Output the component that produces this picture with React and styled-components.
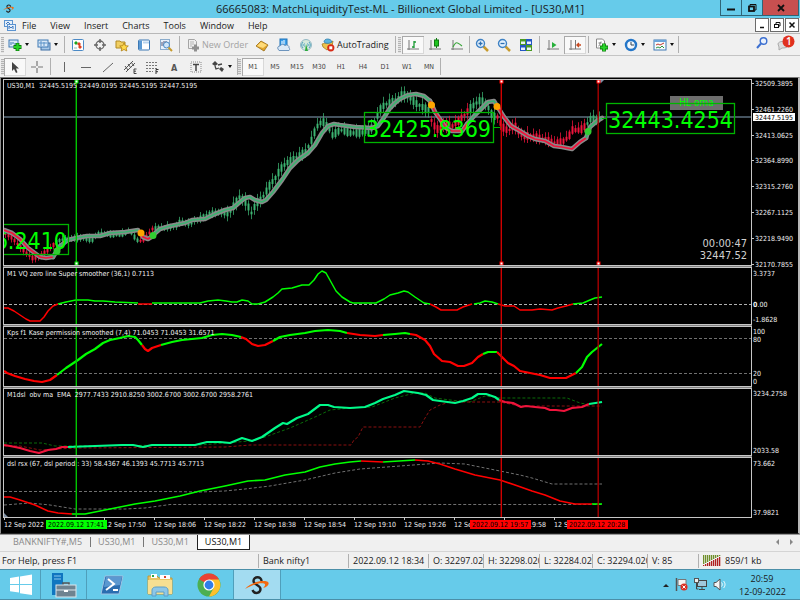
import React, { useState } from 'react';
import styled, { createGlobalStyle, css } from 'styled-components';

const GlobalStyle = createGlobalStyle`
  * {
    box-sizing: border-box;
  }
  body {
    margin: 0;
    background: #f0f0f0;
    font-family: 'Open Sans', 'Noto Sans', sans-serif;
    font-size: 9px;
    line-height: 12px;
    color: #1a1a1a;
  }
  button {
    font: inherit;
    color: inherit;
    padding: 0;
    margin: 0;
    border: none;
    background: none;
  }
`;

const Desktop = styled.div`
  display: flex;
  flex-direction: column;
  min-height: 100vh;
`;

/* ---------- window chrome ---------- */

const TitleBar = styled.header`
  display: flex;
  justify-content: space-between;
  align-items: flex-start;
  height: 18px;
  background: #66cbea;
`;

const TitleSide = styled.div`
  display: flex;
  width: 80px;
  padding-left: ${(props) => (props.$start ? '3px' : '0')};
  padding-top: ${(props) => (props.$start ? '3px' : '0')};
`;

const TitleText = styled.h1`
  margin: 0;
  font-size: 11px;
  font-weight: 400;
  line-height: 18px;
  white-space: nowrap;
`;

const WindowButton = styled.button`
  display: flex;
  align-items: center;
  justify-content: center;
  width: ${(props) => (props.$close ? '37px' : '22px')};
  height: 16px;
  background: ${(props) => (props.$close ? '#c75050' : '#66cbea')};
  border: 1px solid #2f6577;
  border-top: none;
  margin-left: ${(props) => (props.$first ? '0' : '-1px')};
`;

const MenuBar = styled.nav`
  display: flex;
  align-items: center;
  height: 16px;
  padding-left: 3px;
  gap: 14px;
  border-bottom: 1px solid #b8b8b8;

  > svg {
    margin-right: -9px;
  }
`;

const MenuItem = styled.button`
  line-height: 14px;
`;

const MdiButtons = styled.div`
  display: flex;
  align-self: flex-start;
  gap: 1px;
  margin-left: auto;
  padding-right: 1px;
`;

const MdiButton = styled.button`
  display: flex;
  align-items: center;
  justify-content: center;
  width: 14px;
  height: 14px;
  background: #fff;
  border: 1px solid #6b6b6b;
`;

const Toolbar = styled.div`
  display: flex;
  align-items: center;
  height: ${(props) => (props.$last ? '21px' : '22px')};
  border-bottom: ${(props) => (props.$last ? 'none' : '1px solid #c4c4c4')};
`;

const Grip = styled.span`
  width: 3px;
  height: 16px;
  margin: ${(props) => (props.$inner ? '0 1px 0 0' : '0 0 0 1px')};
  background: repeating-linear-gradient(#b4b4b4 0 1px, #e4e4e4 1px 2px);
`;

const Divider = styled.span`
  width: ${(props) => props.$width || 5}px;
  height: 17px;
  background: linear-gradient(#b0b0b0, #b0b0b0) center / 1px 100% no-repeat;
`;

const ToolButton = styled.button`
  display: flex;
  align-items: center;
  gap: 2px;
  height: 18px;
  width: ${(props) => (props.$label ? `${props.$label}px` : props.$drop ? '29px' : '22px')};
  padding-left: ${(props) => (props.$text ? '0' : '4px')};
  justify-content: ${(props) => (props.$text ? 'center' : 'flex-start')};
  white-space: nowrap;
  color: ${(props) => (props.$muted ? '#a3a3a3' : '#1a1a1a')};

  > svg {
    flex: none;
  }
  ${(props) =>
    props.$text &&
    css`
      font-family: 'DejaVu Sans Condensed', 'DejaVu Sans', sans-serif;
      font-size: 7px;
      color: #444;
    `}
  ${(props) =>
    props.$pressed &&
    css`
      background: #f9f9f9;
      box-shadow: inset 1px 1px 0 #a9a9a9, inset -1px -1px 0 #d8d8d8;
    `}
`;

const Caret = styled.span`
  margin-left: 1px;
  border: 2px solid transparent;
  border-top: 3px solid #111;
  border-bottom: none;
`;

const RightTools = styled.div`
  display: flex;
  gap: 7px;
  margin-left: auto;
  padding-right: 4px;
`;

/* ---------- chart window ---------- */

const ChartWindow = styled.main`
  display: flex;
  flex-direction: column;
  flex: 1;
  padding: 1px 0 0 2px;
  background: #000;
  border-top: 1px solid #777;
  border-left: 1px solid #8c8c8c;
  border-right: 2px solid #b8b8b8;
  border-bottom: 1px solid #222;
`;

const Panel = styled.section`
  display: flex;
  flex: none;
  height: ${(props) => props.$size}px;
`;

const Splitter = styled.div`
  height: 1px;
  margin-right: 46px;
  background: #808080;
`;

const Plot = styled.div`
  position: relative;
  flex: 1;
  overflow: hidden;
  border: 1px solid #c6c6c6;

  > svg {
    position: relative;
    display: block;
    width: 100%;
    height: 100%;
    pointer-events: none;
  }
`;

const AxisSvg = styled.svg`
  flex: none;
  width: 46px;
  height: 100%;
  overflow: visible;
`;

const ChartText = styled.text`
  font-family: 'DejaVu Sans Condensed', 'DejaVu Sans', sans-serif;
  font-size: ${(props) => props.$size || 7}px;
  fill: ${(props) => props.$color || '#f0f0f0'};
  white-space: pre;
`;

const ChartBadge = styled.button`
  position: absolute;
  top: 16px;
  right: 28px;
  width: 53px;
  height: 14px;
  background: #6e6e6e;
  color: #00ff00;
  font-family: 'DejaVu Sans Condensed', 'DejaVu Sans', sans-serif;
  font-size: 10px;
`;

const Countdown = styled.div`
  position: absolute;
  right: 4px;
  bottom: 3px;
  text-align: right;
  font-family: 'DejaVu Sans Condensed', 'DejaVu Sans', sans-serif;
  font-size: 11px;
  line-height: 12px;
  color: #d0d0d0;
`;

const TimeAxis = styled.svg`
  display: block;
  flex: none;
  width: 100%;
  height: 15px;
`;

/* ---------- bottom bars ---------- */

const TabBar = styled.div`
  display: flex;
  align-items: center;
  height: 18px;
  padding: 0 3px 2px 5px;
  border-top: 1px solid #999;
  border-bottom: 1px solid #d4d4d4;
`;

const ChartTab = styled.button`
  height: 15px;
  padding: 0 7px;
  color: ${(props) => (props.$active ? '#111' : '#8a8a8a')};
  background: ${(props) => (props.$active ? '#fff' : 'transparent')};
  border: 1px solid ${(props) => (props.$active ? '#222' : 'transparent')};
  border-top: none;
`;

const TabMark = styled.span`
  width: 1px;
  height: 10px;
  margin: 0 -1px 0 0;
  background: ${(props) => (props.$hidden ? 'transparent' : '#777')};
`;

const TabScroll = styled.div`
  display: flex;
  gap: 10px;
  margin-left: auto;
  padding-right: 3px;
`;

const StatusBar = styled.footer`
  display: flex;
  align-items: center;
  height: 17px;
`;

const StatusCell = styled.div`
  display: flex;
  align-items: center;
  flex: ${(props) => (props.$grow ? '1 1 0' : `0 0 ${props.$width}px`)};
  height: 14px;
  padding-left: ${(props) => (props.$grow ? '2px' : '4px')};
  gap: 3px;
  overflow: hidden;
  white-space: nowrap;
  border-left: ${(props) => (props.$grow ? 'none' : '1px solid #b0b0b0')};
`;

const Taskbar = styled.footer`
  display: flex;
  height: 31px;
  background: #66cbea;
  border-top: 1px solid #4b8fa8;
  border-bottom: 1px solid #4b8fa8;
`;

const TaskButton = styled.button`
  display: flex;
  align-items: center;
  justify-content: center;
  width: ${(props) => props.$width}px;
  background: ${(props) => (props.$active ? '#a3dcf1' : 'transparent')};
  border-right: 1px solid ${(props) => (props.$edge ? '#4f9fbb' : 'transparent')};
  border-left: 1px solid ${(props) => (props.$active ? '#4f9fbb' : 'transparent')};
`;

const Tray = styled.div`
  display: flex;
  align-items: center;
  gap: 6px;
  margin-left: auto;
`;

const Clock = styled.time`
  width: 46px;
  margin: 0 15px 0 7px;
  line-height: 13px;
  text-align: center;
  white-space: nowrap;
`;

/* ---------- icons ---------- */

const icons = {
  newChart: (
    <>
      <rect x="1" y="2" width="9" height="7" fill="#dcebf8" stroke="#3c78b4" />
      <path d="M3 7V4M5 6V4M7 7V5" stroke="#3c78b4" fill="none" />
      <path d="M5.500 9H13.500M9.500 5V13" stroke="#0a7a0a" strokeWidth="3.800" />
      <path d="M6 9H13M9.500 5.500V12.500" stroke="#28d428" strokeWidth="2.200" />
    </>
  ),
  profiles: (
    <>
      <rect x="4" y="5" width="9" height="7" fill="#a9c9e8" stroke="#3c6ea5" />
      <rect x="1" y="2" width="10" height="7" fill="#d9e8f7" stroke="#3c78b4" />
      <path d="M2 5H10M4 3V8M7 4V8" stroke="#5b92c8" fill="none" />
    </>
  ),
  marketWatch: (
    <>
      <rect x="1.500" y="1.500" width="11" height="11" rx="1" fill="#fdfdfd" stroke="#4b8ac6" />
      <path d="M3 5l2-2 2 2-2 2z" fill="#1da51d" />
      <path d="M6 6l2-2 2 2-2 2zM7 9l2-2 2 2-2 2z" fill="#e04020" />
      <path d="M3 10h3" stroke="#9bb" />
    </>
  ),
  crosshair: (
    <>
      <circle cx="7" cy="7" r="4" fill="none" stroke="#666" strokeWidth="1.300" />
      <path d="M7 1V5M7 9V13M1 7H5M9 7H13" stroke="#666" strokeWidth="1.500" />
    </>
  ),
  favorites: (
    <>
      <path d="M1 3h4l1 1h4v6H1z" fill="#f2cf62" stroke="#b08a22" />
      <path d="M9 5l1.300 2.700 3 .3-2.200 2 .7 3L9 11.500 6.200 13l.7-3-2.200-2 3-.3z" fill="#ffd94a" stroke="#b07f10" strokeWidth=".8" />
    </>
  ),
  navigator: (
    <>
      <rect x="1.500" y="2" width="11" height="10" rx="1" fill="#fff" stroke="#3c78b4" />
      <rect x="2" y="2.500" width="3" height="9" fill="#5c9ad4" />
      <path d="M6 4.500h6" stroke="#b9d4ee" strokeWidth="2" />
    </>
  ),
  tester: (
    <>
      <rect x="1.500" y="1.500" width="9" height="10" fill="#e8f1fa" stroke="#8aaccc" />
      <path d="M3 8V4M5 7V3M7 5V3" stroke="#557" />
      <circle cx="7.500" cy="7" r="3" fill="#cfe6fa" stroke="#4a88c0" />
      <path d="M9.500 9.500L13 13" stroke="#c79a2c" strokeWidth="2" />
    </>
  ),
  newOrder: (
    <>
      <path d="M2.500 1.500h6l2 2v7h-8z" fill="#eee" stroke="#a5a5a5" />
      <path d="M4 4h4M4 6h4M4 8h2" stroke="#b5b5b5" />
      <path d="M6 10H13M9.500 6.500V13.500" stroke="#8f8f8f" strokeWidth="3" />
    </>
  ),
  gold: (
    <>
      <path d="M1 8l5-5 7 4-4 6z" fill="#e0a52c" stroke="#9a6c10" strokeWidth=".8" />
      <path d="M2 8l4-4 6 3-4 3z" fill="#ffdb78" />
    </>
  ),
  hosting: (
    <>
      <rect x="3" y="1" width="7" height="7" fill="#3aa0ee" stroke="#1f72b8" />
      <path d="M5 3v4M7 2v4" stroke="#fff" />
      <path d="M1 11a2 2 0 012-3 3 3 0 015-.5A2.500 2.500 0 0112 10a1.500 1.500 0 010 2.500H2z" fill="#dbe9f7" stroke="#6d94bd" />
    </>
  ),
  signals: (
    <>
      <circle cx="7" cy="7" r="5.500" fill="#d5e9dc" stroke="#94b9c4" />
      <path d="M4 10a4.200 4.200 0 010-6M10 4a4.200 4.200 0 010 6M5.500 8.500a2 2 0 010-3M8.500 5.500a2 2 0 010 3" fill="none" stroke="#4d9fc0" />
      <path d="M7 6l2 7H6z" fill="#2daa3a" />
    </>
  ),
  autoTrading: (
    <>
      <path d="M1 6c3-1 9-1 11-3l-1 5-5 4-4-3z" fill="#edc34d" stroke="#a47c1c" strokeWidth=".8" />
      <path d="M3 4c0-4 7-4 8 0-2 1.500-6 2-8 0z" fill="#58b4e0" stroke="#2d7ca8" strokeWidth=".8" />
      <circle cx="9.800" cy="9.800" r="3.600" fill="#d82a16" />
      <rect x="8.300" y="8.300" width="3" height="3" fill="#fff" />
    </>
  ),
  bars: (
    <>
      <path d="M3 2v10M1 11h12" stroke="#777" />
      <path d="M8 3v7M8 4h2M6 9h2" stroke="#1d9a35" strokeWidth="1.300" />
    </>
  ),
  candles: (
    <>
      <path d="M3 2v10M1 11h12" stroke="#777" />
      <path d="M8.500 0v10" stroke="#117a11" />
      <rect x="6.500" y="2" width="4" height="6" fill="#1fc41f" stroke="#117a11" />
    </>
  ),
  line: (
    <>
      <path d="M3 2v10M1 11h12" stroke="#777" />
      <path d="M3 9c3-6 4-5 9-1" fill="none" stroke="#3aa53a" strokeWidth="1.200" />
    </>
  ),
  zoomIn: (
    <>
      <path d="M8.500 8.500L13 13" stroke="#c79a2c" strokeWidth="2.500" />
      <circle cx="5.500" cy="5.500" r="4" fill="#e4f1fc" stroke="#3f82c4" strokeWidth="1.400" />
      <path d="M3.500 5.500h4M5.500 3.500v4" stroke="#2d6fb2" strokeWidth="1.300" />
    </>
  ),
  zoomOut: (
    <>
      <path d="M8.500 8.500L13 13" stroke="#c79a2c" strokeWidth="2.500" />
      <circle cx="5.500" cy="5.500" r="4" fill="#e4f1fc" stroke="#3f82c4" strokeWidth="1.400" />
      <path d="M3.500 5.500h4" stroke="#2d6fb2" strokeWidth="1.300" />
    </>
  ),
  tile: (
    <>
      <path d="M1 1h6v6H1zM7 7h6v6H7z" fill="#4a9a22" />
      <path d="M7 1h6v6H7zM1 7h6v6H1z" fill="#2456c4" />
      <path d="M2 3.500h4v2.500H2zM8 3.500h4v2.500H8zM2 9.500h4V12H2zM8 9.500h4V12H8z" fill="#e9f2fb" />
    </>
  ),
  scroll: (
    <>
      <path d="M3 2v10M1 11h12" stroke="#777" />
      <path d="M6 4l4.500 3L6 10z" fill="#27b03a" />
    </>
  ),
  shift: (
    <>
      <path d="M3 2v10M1 11h12M7.500 2v9" stroke="#777" />
      <path d="M13 7H9M11 5L9 7l2 2" fill="none" stroke="#c8481e" strokeWidth="1.400" />
    </>
  ),
  indicators: (
    <>
      <path d="M1.500 1h6l2 2v7h-8z" fill="#fff" stroke="#888" />
      <path d="M3.500 8c2 0 1-5 3-4M3.500 5h3" fill="none" stroke="#777" />
      <path d="M5 9.500H13M9 5.500V13.500" stroke="#0a7a0a" strokeWidth="3.800" />
      <path d="M5.500 9.500H12.500M9 6V13" stroke="#28d428" strokeWidth="2.200" />
    </>
  ),
  periods: (
    <>
      <circle cx="7" cy="7" r="5" fill="#f4f8fc" stroke="#2476c8" strokeWidth="2.400" />
      <path d="M7 4v3h3" fill="none" stroke="#345" />
    </>
  ),
  templates: (
    <>
      <rect x="1" y="2" width="12" height="10" fill="#f7fafc" stroke="#3c78b4" />
      <path d="M1 3h12" stroke="#6aa4da" strokeWidth="2" />
      <path d="M3 7l2-1 2 1 4-2" fill="none" stroke="#c0392b" />
      <path d="M3 10l2-1 2 1 2-2 2 2" fill="none" stroke="#2f9440" />
    </>
  ),
  search: (
    <>
      <circle cx="8.500" cy="5" r="3.300" fill="#e9f1fc" stroke="#3c6fd0" strokeWidth="1.400" />
      <path d="M6 7.500L2 12" stroke="#3c6fd0" strokeWidth="2" />
    </>
  ),
  cursor: <path d="M4 2v9l2-2 2 4 1.500-.8L8 8.500h3z" fill="#444" />,
  cross: <path d="M7 1v5M7 8v5M1 7h5M8 7h5" stroke="#777" strokeWidth="1.200" />,
  vline: <path d="M7.500 2v10" stroke="#666" />,
  hline: <path d="M2 7.500h10" stroke="#666" />,
  trend: <path d="M2 12L12 3" stroke="#666" />,
  channel: (
    <>
      <path d="M1 10L10 1M3 12L12 3M2 6l3 4M5 4l3 4M8 2l3 4" fill="none" stroke="#555" />
      <path d="M13.500 9H11v4.500h2.500M11 11.200h2" fill="none" stroke="#333" strokeWidth=".9" />
    </>
  ),
  fibo: (
    <>
      <path d="M1 2.500h12M1 5.500h12M1 8.500h12M1 11.500h7" stroke="#777" strokeDasharray="2 1" />
      <path d="M13.500 9.500H11V14M11 11.700h2" fill="none" stroke="#333" />
    </>
  ),
  label: (
    <>
      <rect x="2" y="2" width="10" height="10" fill="none" stroke="#888" strokeDasharray="1 1" />
      <path d="M4 4.500h6M7 4.500V11" stroke="#444" strokeWidth="1.500" />
    </>
  ),
  arrows: (
    <>
      <path d="M1 4l3-3 3 3-3 2z" fill="#444" />
      <path d="M8 9l2-2 3 2-2 3z" fill="#444" />
      <path d="M4 6l1 3 3-1M7 5l4-1" fill="none" stroke="#444" strokeWidth="1.300" />
    </>
  ),
};

const Icon = ({ name, size = 14 }) => (
  <svg width={size} height={size} viewBox="0 0 14 14" aria-hidden="true">
    {icons[name]}
  </svg>
);

const BrokerLogo = ({ size }) => (
  <svg width={size} height={size} viewBox="0 0 24 24" aria-hidden="true">
    <path d="M16.500 8c0-5-8-5-8 0 0 4 7 4 7 8s-6 6-8 1" fill="none" stroke="#222" strokeWidth="2.400" />
    <path d="M0 16C5 10 15 7 22 8.500c3 1 2 5-4 6.500 2-2 3-4 1-4.500C14 9.500 7 12 0 16z" fill="#f26a10" />
  </svg>
);

/* ---------- chart data ---------- */

const GREEN = '#00ff00';
const RED = '#ff0000';
const SEA = '#3cb371';
const CRIMSON = '#f0143c';
const MINT = '#00fa8a';

// rough course of the price, [x, y]
const price = [
  [4, 234], [10, 236], [18, 245], [25, 252], [32, 258], [38, 257], [44, 253], [50, 248], [55, 243],
  [60, 240], [66, 239], [80, 238], [92, 240], [98, 234], [110, 235], [120, 235], [130, 231], [136, 240],
  [141, 241], [146, 237], [152, 229], [158, 228], [168, 227], [175, 227], [180, 221], [187, 224],
  [200, 218], [210, 213], [220, 212], [228, 214], [235, 203], [240, 196], [246, 203], [251, 213],
  [256, 203], [262, 198], [266, 191], [270, 184], [275, 178], [280, 169], [286, 163], [292, 160],
  [298, 156], [305, 152], [310, 143], [316, 127], [322, 121], [328, 128], [332, 135], [340, 130],
  [350, 133], [360, 133], [370, 130], [376, 118], [381, 107], [388, 103], [395, 101], [402, 94],
  [410, 98], [415, 103], [420, 106], [428, 110], [432, 124], [438, 130], [444, 124], [452, 126],
  [458, 121], [464, 115], [470, 108], [476, 103], [480, 100], [486, 104], [492, 116], [497, 117],
  [502, 127], [508, 131], [514, 125], [520, 135], [528, 136], [535, 137], [545, 140], [555, 143],
  [562, 142], [568, 137], [572, 130], [580, 130], [586, 125], [590, 119], [597, 120], [602, 117],
];

const redRanges = [[0, 54], [140, 153], [430, 467], [495, 586]];

const priceAt = (x) => {
  const i = Math.max(1, price.findIndex((p) => p[0] >= x));
  const [x0, y0] = price[i - 1];
  const [x1, y1] = price[i];
  return y0 + ((y1 - y0) * (x - x0)) / (x1 - x0);
};

const candles = [];
for (let x = 5; x <= 601; x += 3) {
  const n = (x - 5) / 3;
  const mid = priceAt(x);
  const quiet = x < 225 ? 0.6 : 1;
  const body = (2 + Math.abs(Math.sin(n * 2.3)) * 6) * quiet;
  const up = (1 + Math.abs(Math.sin(n * 1.7 + 1)) * 5) * quiet;
  const down = (1 + Math.abs(Math.cos(n * 3.1)) * 4) * quiet;
  const red = redRanges.some(([a, b]) => x >= a && x <= b);
  candles.push({ x, mid, body, up, down, color: red ? CRIMSON : SEA });
}

const average = [
  [CRIMSON, '4,230 12,233 20,239 28,248 36,254 40,257 46,258 53,257'],
  [SEA, '53,257 60,246 68,240 76,238 87,236 100,236 110,233 125,232 138,230'],
  [CRIMSON, '141,233 143,237 148,239 153,236'],
  [SEA, '153,235 160,229 170,226 185,223 192,220 205,219 215,214 225,210 233,208 240,202 245,198 250,197 255,200 262,202 266,200 273,192 282,180 290,168 298,160 308,153 315,145 322,133 328,126 334,124 340,125 355,127 372,128 378,126 383,119 390,108 395,103 400,99 408,95 416,94 424,96 430,101'],
  [CRIMSON, '430,101 435,112 440,119 446,128 452,131 462,131 467,124'],
  [SEA, '467,124 475,115 482,108 488,102 494,101 497,106'],
  [CRIMSON, '497,106 504,117 511,126 520,131 528,136 535,139 545,141 554,146 562,147 572,149 580,142 586,138'],
  [SEA, '586,138 590,127 597,121 602,118'],
];

const vq = [
  [RED, '4,308 8,308 14,311 20,315 26,319 30,321 40,321 44,317 48,311 53,306 58,304'],
  [GREEN, '58,304 66,302 76,300 88,300 95,301 103,301 115,302 138,303'],
  [RED, '138,304 152,304'],
  [GREEN, '152,303 200,303 208,301 218,300 226,301 232,302 237,302 242,300 248,301 252,304 258,304 265,302 273,297 278,293 282,289 292,288 302,285 309,285 314,280 318,274 322,271 326,273 331,282 336,291 342,297 350,302 353,303 376,303 384,299 390,295 398,293 404,291 408,292 415,297 424,303 430,304'],
  [RED, '430,304 436,307 441,310 457,310 463,307 472,304'],
  [GREEN, '474,304 480,303 485,301 492,302 498,304'],
  [RED, '498,304 505,306 514,306 520,310 532,310 540,309 552,310 558,308 566,306 573,304'],
  [GREEN, '573,304 583,303 590,300 595,298 602,297'],
];

const kase = [
  [RED, '4,371 7,373 15,376 25,379 34,381 42,382 50,380 57,375'],
  [GREEN, '57,375 66,368 78,360 86,354 95,349 103,343 110,340 120,338 128,336 135,337 138,340 142,345'],
  [RED, '142,345 145,349 148,351 152,348 161,345'],
  [GREEN, '161,345 172,342 182,340 202,338 212,335 222,334 232,335 241,337'],
  [RED, '241,337 246,339 252,344 258,346 265,345 273,341'],
  [GREEN, '273,341 280,337 290,335 305,333 315,331 328,330 340,331 347,333'],
  [RED, '347,333 360,335 375,336 383,335'],
  [GREEN, '383,335 395,334 405,333 410,334'],
  [RED, '410,334 416,335 425,340 430,346 434,354 442,361 450,362 458,366 464,366 472,363 478,357 483,354'],
  [GREEN, '483,354 488,352 497,352'],
  [RED, '497,352 503,358 508,363 514,366 520,371 530,373 540,375 550,378 566,378 576,373'],
  [GREEN, '576,373 582,367 587,357 592,352 602,344'],
];

const obv = [
  [CRIMSON, '4,445 10,446 20,448 30,451 39,453 48,450 56,449 62,447 68,447'],
  [MINT, '68,447 95,446 122,445 133,445 143,447 152,445 195,445 207,442 220,442 230,443 242,438 252,441 262,437 275,428 283,423 287,424 297,418 308,414 320,405 328,405 334,407 350,408 365,407 375,403 383,399 395,395 404,391 418,393 426,395 433,400 440,401 455,403 463,401 472,398 478,394 486,394 495,397 499,400'],
  [CRIMSON, '499,400 505,402 513,403 521,407 526,406 535,407 545,408 550,410 556,410 564,411 572,408 582,407 589,404'],
  [MINT, '589,404 602,402'],
];

const rsx = [
  [RED, '4,497 10,497 20,500 35,505 48,511 58,513 72,514'],
  [GREEN, '72,514 85,514 100,511 115,508 135,504 155,501 180,496 200,491 225,486 248,481 265,480 285,475 305,472 320,467 335,464 350,462 361,461'],
  [RED, '361,461 383,462'],
  [GREEN, '383,462 415,460'],
  [RED, '415,460 428,461 440,464 455,469 475,475 500,480 515,485 532,491 545,495 560,501 575,504 592,504'],
  [GREEN, '592,504 602,504'],
];

const Series = ({ data, width }) =>
  data.map(([color, points]) => (
    <polyline key={points} points={points} fill="none" stroke={color} strokeWidth={width} strokeLinejoin="round" />
  ));

const Dashes = ({ points, color = '#707070' }) => (
  <polyline points={points} fill="none" stroke={color} strokeDasharray="3 2" />
);

const VerticalMarks = ({ top }) => (
  <g strokeWidth="1.400">
    <path d={`M76.300 ${top}v400`} stroke="#00c400" />
    <path d={`M501.300 ${top}v400`} stroke="#d00000" />
    <path d={`M598.200 ${top}v400`} stroke="#a80000" />
  </g>
);

// small squares at both ends of each vertical line
const Handles = () =>
  [[76, '#00e000'], [501, RED], [598, RED]].map(([x, color]) => (
    <g key={x} fill="#fff" stroke={color}>
      <rect x={x - 1} y="80" width="3" height="3" />
      <rect x={x - 1} y="262" width="3" height="3" />
    </g>
  ));

const PlotArea = ({ top, title, children, extra, overlay }) => (
  <Plot>
    {extra}
    <svg>
      <g transform={`translate(-4 ${-top - 1})`}>
        {children}
        <VerticalMarks top={top} />
        {overlay}
        <ChartText x="7" y={top + 9}>{title}</ChartText>
      </g>
    </svg>
  </Plot>
);

const Axis = ({ top, labels, children }) => (
  <AxisSvg>
    <g transform={`translate(-752 ${-top})`}>
      {labels.map(([y, text, tick]) => (
        <g key={text}>
          {tick && <path d={`M752 ${y}.500h2`} stroke="#c6c6c6" />}
          <ChartText x={tick ? 755 : 753} y={y + 3}>{text}</ChartText>
        </g>
      ))}
      {children}
    </g>
  </AxisSvg>
);

const PriceTag = ({ x, y, width, text, textX }) => (
  <g>
    <rect x={x + 0.5} y={y + 0.5} width={width} height="30" fill="none" stroke="#00b400" strokeWidth="1.300" />
    <ChartText x={textX} y={y + 25} $size={23} $color={GREEN}>{text}</ChartText>
  </g>
);

const MainPlot = () => (
  <Panel $size={187}>
    <PlotArea
      top={79}
      title="US30,M1  32445.5195 32449.0195 32445.5195 32447.5195"
      overlay={<Handles />}
      extra={
        <>
          <ChartBadge>HL oma</ChartBadge>
          <Countdown>
            00:00:47
            <br />
            32447.52
          </Countdown>
        </>
      }
    >
      <path d="M4 117h4000" stroke="#5d6f7f" strokeWidth="1.500" />
      {candles.map((c) => (
        <g key={c.x} fill={c.color}>
          <rect x={c.x} y={c.mid - c.body / 2 - c.up} width="1" height={c.body + c.up + c.down} opacity=".75" />
          <rect x={c.x - 0.5} y={c.mid - c.body / 2} width="2" height={c.body} />
        </g>
      ))}
      {average.map(([color, points]) => (
        <polyline key={points} points={points} fill="none" stroke="#8a8a8a" strokeWidth="4.600" strokeLinejoin="round" strokeLinecap="round" />
      ))}
      <Series data={average} width="1.700" />
      <PriceTag x={-60} y={224} width={128} text="32236.2410" textX={-58} />
      <PriceTag x={364} y={112} width={129} text="32425.8369" textX={366} />
      <PriceTag x={606} y={103} width={128} text="32443.4254" textX={608} />
      <path d="M494 127.500h7M602 118.500h4" stroke="#00b400" />
      <g fill="#ffa500">
        <circle cx="141" cy="233" r="3.500" />
        <circle cx="431.500" cy="105" r="3.500" />
        <circle cx="497" cy="106.500" r="3.500" />
      </g>
      <g fill="#32cd32">
        <circle cx="57" cy="251" r="3.500" />
        <circle cx="153" cy="235.500" r="3.500" />
        <circle cx="588" cy="131.500" r="3.500" />
      </g>
      <path d="M597 80h7l-3 3z" fill="#7f90a4" />
    </PlotArea>
    <Axis
      top={79}
      labels={[
        [83, '32509.3895', true], [109, '32461.2260', true], [135, '32413.0625', true],
        [160, '32364.8990', true], [186, '32315.2760', true], [212, '32267.1125', true],
        [238, '32218.9490', true], [264, '32170.7855', true],
      ]}
    >
      <rect x="753" y="113" width="42" height="8" fill="#fff" />
      <ChartText x="755" y="120" $color="#000">32447.5195</ChartText>
    </Axis>
  </Panel>
);

const timeLabels = [[4, '12 Sep 2022'], [104, '12 Sep 17:50'], [154, '12 Sep 18:06'], [204, '12 Sep 18:22'],
  [254, '12 Sep 18:38'], [304, '12 Sep 18:54'], [354, '12 Sep 19:10'], [404, '12 Sep 19:26'],
  [454, '12 Sep 19:42'], [504, '12 Sep 19:58'], [554, '12 Sep 20:14']];

const timeMarks = [
  [46, '2022.09.12 17:41', GREEN],
  [470, '2022.09.12 19:57', RED],
  [567, '2022.09.12 20:28', RED],
];

const ChartArea = () => (
  <ChartWindow>
    <MainPlot />
    <Splitter />
    <Panel $size={58}>
      <PlotArea top={267} title="M1 VQ zero line Super smoother (36,1) 0.7113">
        <Dashes points="4,304.500 4000,304.500" color="#b0b0b0" />
        <Series data={vq} width="1.500" />
      </PlotArea>
      <Axis top={267} labels={[[273, '3.3737'], [319, '-1.8628']]}>
        <ChartText x="753" y="307">
          <tspan fontWeight="700">0</tspan>.00
        </ChartText>
      </Axis>
    </Panel>
    <Splitter />
    <Panel $size={61}>
      <PlotArea top={326} title="Kps f1 Kase permission smoothed (7,4) 71.0453 71.0453 31.6571">
        <Dashes points="4,338.500 4000,338.500" />
        <Dashes points="4,373.500 4000,373.500" />
        <Series data={kase} width="2.200" />
      </PlotArea>
      <Axis top={326} labels={[[331, '100'], [339, '80'], [373, '20'], [381, '0']]} />
    </Panel>
    <Splitter />
    <Panel $size={68}>
      <PlotArea top={388} title="M1dsl  obv ma  EMA  2977.7433 2910.8250 3002.6700 3002.6700 2958.2761">
        <Dashes
          points="4,443 42,443 55,446 200,445 250,441 265,437 290,428 315,417 330,410 350,408 372,407 395,398 415,393 425,393 435,398 450,400 470,402 485,396 500,398 567,398 580,403 590,405"
          color="#0a6a0a"
        />
        <Dashes
          points="4,446 20,446 40,450 55,449 80,448 225,447 250,445 351,445 354,440 358,437 363,427 420,427 425,418 430,410 440,405 450,402 500,402 520,406 602,406"
          color="#8a1010"
        />
        <Series data={obv} width="2.200" />
      </PlotArea>
      <Axis top={388} labels={[[393, '3234.2758'], [450, '2033.58']]} />
    </Panel>
    <Splitter />
    <Panel $size={61}>
      <PlotArea top={457} title="dsl rsx (67, dsl period : 33) 58.4367 46.1393 45.7713 45.7713">
        <Dashes points="4,491.500 170,491.500 200,492 225,491 245,489 270,486 305,480 335,473 360,469 400,466 440,463 465,464 490,469 520,475 532,478 552,484 602,484" />
        <Dashes points="4,505 30,503 50,505 75,509 105,509 125,509 145,508 170,504.500 602,504.500" />
        <Series data={rsx} width="1.600" />
        <path d="M4 513l4 4H4z" fill="#7f90a4" />
      </PlotArea>
      <Axis top={457} labels={[[463, '73.662'], [512, '37.9821']]} />
    </Panel>
    <TimeAxis>
      <g transform="translate(-3 -518)">
        {timeLabels.map(([x, text]) => (
          <g key={x}>
            <path d={`M${x}.500 518v2`} stroke="#c6c6c6" />
            <ChartText x={x} y="527">{text}</ChartText>
          </g>
        ))}
        {timeMarks.map(([x, text, color]) => (
          <g key={x}>
            <rect x={x} y="520" width="61" height="9" fill={color} />
            <ChartText x={x + 2} y="527" $color="#000">{text}</ChartText>
          </g>
        ))}
      </g>
    </TimeAxis>
  </ChartWindow>
);

/* ---------- app ---------- */

const menus = ['File', 'View', 'Insert', 'Charts', 'Tools', 'Window', 'Help'];
const periods = ['M1', 'M5', 'M15', 'M30', 'H1', 'H4', 'D1', 'W1', 'MN'];
const tabs = ['BANKNIFTY#,M5', 'US30,M1', 'US30,M1', 'US30,M1'];

const Tool = ({ name, ...props }) => (
  <ToolButton aria-label={name} {...props}>
    <Icon name={name} />
    {props.$drop && <Caret />}
  </ToolButton>
);

const Chrome = () => (
  <svg width="24" height="24" viewBox="0 0 24 24" aria-hidden="true">
    <circle cx="12" cy="12" r="11.500" fill="#4caf50" />
    <path d="M12 12L2.040 6.250A11.500 11.500 0 0121.960 6.250z" fill="#ea4335" />
    <path d="M12 6.500h10A11.500 11.500 0 0112 23.500l4.800-8.700z" fill="#fbc02d" />
    <circle cx="12" cy="12" r="5.600" fill="#fff" />
    <circle cx="12" cy="12" r="4.400" fill="#2f7de9" />
  </svg>
);

export default function App() {
  const [period, setPeriod] = useState('M1');
  const [tab, setTab] = useState(3);

  return (
    <Desktop>
      <GlobalStyle />
      <TitleBar>
        <TitleSide $start>
          <BrokerLogo size={11} />
        </TitleSide>
        <TitleText>66665083: MatchLiquidityTest-ML - Billionext Global Limited - [US30,M1]</TitleText>
        <TitleSide>
          <WindowButton $first aria-label="Minimize">
            <svg width="10" height="10"><path d="M1 6.500h8" stroke="#111" strokeWidth="2" /></svg>
          </WindowButton>
          <WindowButton aria-label="Restore">
            <svg width="10" height="10">
              <path d="M3 3V1.500h6V7H7.500" fill="none" stroke="#111" />
              <rect x="2" y="3.500" width="5" height="4.500" fill="none" stroke="#111" strokeWidth="1.800" />
            </svg>
          </WindowButton>
          <WindowButton $close aria-label="Close">
            <svg width="8" height="8"><path d="M1 1l6 6M7 1L1 7" stroke="#111" strokeWidth="1.800" /></svg>
          </WindowButton>
        </TitleSide>
      </TitleBar>

      <MenuBar>
        <svg width="14" height="14" viewBox="0 0 14 14" aria-hidden="true">
          <rect x="1.500" y="1.500" width="8" height="6" fill="#e6f0fa" stroke="#5b93d0" />
          <rect x="4.500" y="5.500" width="8" height="6" fill="#e6f0fa" stroke="#5b93d0" />
          <path d="M6 10V7l2 2 2-2v3M3 5l2-2 2 2" fill="none" stroke="#3f78bf" />
        </svg>
        {menus.map((name) => (
          <MenuItem key={name}>{name}</MenuItem>
        ))}
        <MdiButtons>
          <MdiButton aria-label="Minimize chart">
            <svg width="8" height="8"><path d="M2 6.500h4" stroke="#111" strokeWidth="1.500" /></svg>
          </MdiButton>
          <MdiButton aria-label="Restore chart">
            <svg width="8" height="8">
              <path d="M3 3V1.500h4V5H6" fill="none" stroke="#111" />
              <rect x="1.500" y="3.500" width="4" height="3" fill="none" stroke="#111" />
            </svg>
          </MdiButton>
          <MdiButton aria-label="Close chart">
            <svg width="8" height="8"><path d="M1.500 1.500l5 5M6.500 1.500l-5 5" stroke="#111" strokeWidth="1.500" /></svg>
          </MdiButton>
        </MdiButtons>
      </MenuBar>

      <Toolbar>
        <Grip />
        <Tool name="newChart" $drop />
        <Tool name="profiles" $drop />
        <Divider />
        <Tool name="marketWatch" />
        <Tool name="crosshair" />
        <Tool name="favorites" />
        <Tool name="navigator" />
        <Tool name="tester" />
        <Divider />
        <ToolButton $label={69} $muted>
          <Icon name="newOrder" />
          New Order
        </ToolButton>
        <Tool name="gold" />
        <Tool name="hosting" />
        <Tool name="signals" />
        <ToolButton $label={75}>
          <Icon name="autoTrading" />
          AutoTrading
        </ToolButton>
        <Divider $width={6} />
        <Grip $inner />
        <Tool name="bars" $pressed />
        <Tool name="candles" />
        <Tool name="line" />
        <Divider $width={3} />
        <Tool name="zoomIn" />
        <Tool name="zoomOut" />
        <Tool name="tile" />
        <Divider />
        <Tool name="scroll" />
        <Tool name="shift" $pressed />
        <Divider />
        <Tool name="indicators" $drop />
        <Tool name="periods" $drop />
        <Tool name="templates" $drop />
        <Divider $width={1} />
        <RightTools>
          <button aria-label="Search"><Icon name="search" /></button>
          <button aria-label="Notifications">
            <svg width="20" height="16" viewBox="0 0 20 16">
              <path d="M2 9c0-3 9-4 10 0s-4 4-6 4l-3 2v-3z" fill="#ddd" stroke="#aaa" />
              <circle cx="12.500" cy="6.500" r="6" fill="#e0301e" />
              <text x="10" y="10" fontSize="10" fontWeight="600" fill="#fff">1</text>
            </svg>
          </button>
        </RightTools>
      </Toolbar>

      <Toolbar $last>
        <Grip />
        <Tool name="cursor" $pressed />
        <Tool name="cross" />
        <Divider />
        <Tool name="vline" />
        <Tool name="hline" />
        <Tool name="trend" />
        <Tool name="channel" />
        <Tool name="fibo" />
        <ToolButton $text>
          <svg width="10" height="12"><text x="2" y="10" fontSize="9" fontWeight="700" fill="#555">A</text></svg>
        </ToolButton>
        <Tool name="label" />
        <Tool name="arrows" $drop />
        <Divider $width={2} />
        <Grip $inner />
        {periods.map((name) => (
          <ToolButton key={name} $text $pressed={name === period} onClick={() => setPeriod(name)}>
            {name}
          </ToolButton>
        ))}
        <Divider $width={1} />
      </Toolbar>

      <ChartArea />

      <TabBar>
        {tabs.map((name, i) => (
          <React.Fragment key={i}>
            <ChartTab $active={i === tab} onClick={() => setTab(i)}>{name}</ChartTab>
            <TabMark $hidden={i >= 2} />
          </React.Fragment>
        ))}
        <TabScroll>
          <button aria-label="Scroll left">
            <svg width="4" height="6"><path d="M3 0v6L0 3z" fill="#888" /></svg>
          </button>
          <button aria-label="Scroll right">
            <svg width="4" height="6"><path d="M0 0v6l3-3z" fill="#888" /></svg>
          </button>
        </TabScroll>
      </TabBar>

      <StatusBar>
        <StatusCell $grow>For Help, press F1</StatusCell>
        <StatusCell $width={90}>Bank nifty1</StatusCell>
        <StatusCell $width={80}>2022.09.12 18:34</StatusCell>
        <StatusCell $width={55}>O: 32297.0200</StatusCell>
        <StatusCell $width={56}>H: 32298.0200</StatusCell>
        <StatusCell $width={53}>L: 32284.0200</StatusCell>
        <StatusCell $width={55}>C: 32294.0200</StatusCell>
        <StatusCell $width={51}>V: 85</StatusCell>
        <StatusCell $width={102}>
          <svg width="19" height="11" aria-hidden="true">
            {[0, 1, 2, 3, 4, 5, 6, 7, 8].map((i) => (
              <g key={i}>
                <rect x={i * 2} y="0" width="1.300" height={9 - i} fill="#6f8f2a" />
                <rect x={i * 2} y={10 - i} width="1.300" height={i + 1} fill="#b02020" />
              </g>
            ))}
          </svg>
          859/1 kb
        </StatusCell>
      </StatusBar>

      <Taskbar>
        <TaskButton $width={41} $edge aria-label="Start">
          <svg width="22" height="22" viewBox="0 0 22 22">
            <path d="M0 4l9-1.400V10H0zM10 2.400L22 .5V10H10zM0 11h9v7.600L0 17.300zM10 11h12v10l-12-1.800z" fill="#fff" />
          </svg>
        </TaskButton>
        <TaskButton $width={46} $edge aria-label="Server Manager">
          <svg width="26" height="26" viewBox="0 0 26 26">
            <rect x="1" y="1" width="11" height="22" fill="#0f76c0" />
            <path d="M3 4h7M3 7h7" stroke="#8cc8ee" />
            <path d="M12 13v-2h6v2" fill="none" stroke="#555" strokeWidth="1.500" />
            <rect x="5" y="13" width="20" height="12" fill="#6f8390" stroke="#dce6ec" />
            <path d="M5 18h20" stroke="#dce6ec" />
            <path d="M13 18h4v2h-4z" fill="#fff" />
          </svg>
        </TaskButton>
        <TaskButton $width={49} aria-label="PowerShell">
          <svg width="24" height="20" viewBox="0 0 24 20">
            <path d="M5 1h18l-4 18H1z" fill="#2a6db0" stroke="#9fc4e4" />
            <path d="M6 2h16l-2 8L4 12z" fill="#5b98d0" />
            <path d="M8 4l6 5-8 6M13 15h5" fill="none" stroke="#fff" strokeWidth="2" />
          </svg>
        </TaskButton>
        <TaskButton $width={48} aria-label="File Explorer">
          <svg width="26" height="24" viewBox="0 0 26 24">
            <path d="M1 3h9l2 2h13v16H1z" fill="#e9c566" stroke="#c39a37" />
            <path d="M4 1h6v4H4zM13 2h10v4H13z" fill="#fff" />
            <path d="M5 2h2v2H5z" fill="#2aa745" />
            <path d="M17 3h2v2h-2z" fill="#d5422e" />
            <path d="M1 7h24v14H1z" fill="#f7df92" />
            <path d="M5 23v-6c0-2 2-3 4-3h8c2 0 4 1 4 3v6h-4v-4H9v4z" fill="#8ec7e8" stroke="#5d9fc8" />
          </svg>
        </TaskButton>
        <TaskButton $width={49} aria-label="Chrome">
          <Chrome />
        </TaskButton>
        <TaskButton $width={48} $active $edge aria-label="Terminal">
          <BrokerLogo size={24} />
        </TaskButton>
        <Tray>
          <svg width="6" height="4"><path d="M0 4l3-3 3 3z" fill="#222" /></svg>
          <svg width="13" height="13" viewBox="0 0 13 13">
            <path d="M1.500 0v13" stroke="#555" strokeWidth="1.500" />
            <path d="M3 1.500h8v6H3z" fill="#f4f4f4" stroke="#777" />
            <circle cx="9" cy="9" r="3.500" fill="#d93025" />
            <path d="M7.500 7.500l3 3M10.500 7.500l-3 3" stroke="#fff" />
          </svg>
          <svg width="13" height="13" viewBox="0 0 13 13">
            <rect x="3.500" y="2.500" width="9" height="6" fill="#9fc8dc" stroke="#444" />
            <path d="M5 11.500h6M8 9v2" stroke="#444" />
            <rect x="0.500" y="0.500" width="4" height="4" fill="#eee" stroke="#555" />
            <path d="M2.500 5v6h2" fill="none" stroke="#444" />
          </svg>
          <svg width="13" height="13" viewBox="0 0 13 13">
            <path d="M1 4.500h2L7 1v11L3 8.500H1z" fill="#f4f4f4" stroke="#555" />
            <path d="M8.500 4.500c1 1 1 3 0 4M10.500 3c2 2 2 5 0 7" fill="none" stroke="#fff" />
          </svg>
          <Clock>
            20:59
            <br />
            12-09-2022
          </Clock>
        </Tray>
      </Taskbar>
    </Desktop>
  );
}
